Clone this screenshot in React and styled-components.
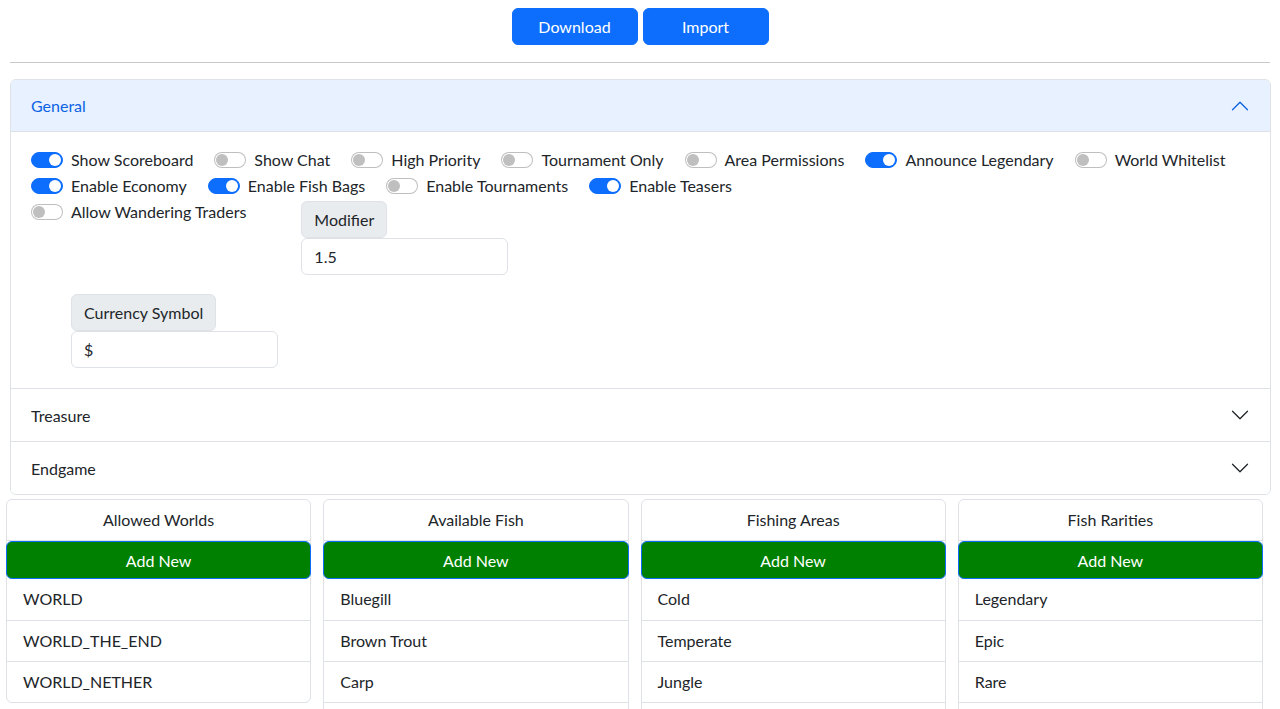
import React from "react"
import styled, { createGlobalStyle, css } from "styled-components"

const font = `"Lato", "Liberation Sans", sans-serif`
const blue = "#0d6efd"
const border = "#dee2e6"
const text = "#212529"

const GlobalStyle = createGlobalStyle`
  body {
    margin: 0;
    font-family: ${font};
    font-size: 16px;
    line-height: 1.5;
    color: ${text};
    background: #fff;
  }
  * {
    box-sizing: border-box;
  }
`

const Page = styled.div`
  padding-top: 8px;
`

const TopBar = styled.div`
  display: flex;
  justify-content: center;
  gap: 5px;
`

const PrimaryButton = styled.button`
  width: 126px;
  height: 37px;
  font-family: ${font};
  font-size: 16px;
  color: #fff;
  background-color: ${blue};
  border: 1px solid ${blue};
  border-radius: 6px;
  cursor: pointer;
`

const Rule = styled.hr`
  margin: 17px 10px 16px 10px;
  border: 0;
  border-top: 1px solid #c8c8c8;
`

const Accordion = styled.div`
  margin: 0 9px 0 10px;
  border: 1px solid ${border};
  border-radius: 6px;
  overflow: hidden;
`

const Item = styled.div`
  & + & {
    border-top: 1px solid ${border};
  }
`

const Header = styled.button`
  display: flex;
  align-items: center;
  justify-content: space-between;
  width: 100%;
  height: 52px;
  padding: 0 20px;
  font-family: ${font};
  font-size: 16px;
  text-align: left;
  border: 0;
  cursor: pointer;
  color: ${(p) => (p.$open ? "#0c63e4" : text)};
  background-color: ${(p) => (p.$open ? "#e7f1ff" : "#fff")};
  ${(p) =>
    p.$open &&
    css`
      border-bottom: 1px solid ${border};
    `}
  svg {
    width: 20px;
    height: 20px;
    transform: ${(p) => (p.$open ? "rotate(180deg)" : "none")};
  }
`

const Body = styled.div`
  padding: 16px 20px 20px 20px;
`

const Checks = styled.div`
  display: flex;
  flex-wrap: wrap;
  align-items: flex-start;
`

const Break = styled.div`
  flex-basis: 100%;
  height: 0;
`

const Check = styled.label`
  display: flex;
  align-items: center;
  height: 24px;
  margin: 0 21px 2px 0;
  white-space: nowrap;
`

const Switch = styled.span`
  position: relative;
  flex: none;
  width: 32px;
  height: 16px;
  margin-right: 8px;
  border-radius: 16px;
  border: 1px solid ${(p) => (p.$on ? blue : "rgba(0,0,0,0.25)")};
  background-color: ${(p) => (p.$on ? blue : "#fff")};
  &::after {
    content: "";
    position: absolute;
    top: 1px;
    left: ${(p) => (p.$on ? "17px" : "1px")};
    width: 12px;
    height: 12px;
    border-radius: 50%;
    background-color: ${(p) => (p.$on ? "#fff" : "#bfbfbf")};
  }
`

const Field = styled.div`
  display: flex;
  flex-direction: column;
  align-items: flex-start;
  margin: ${(p) => p.$margin || "0"};
`

const FieldLabel = styled.span`
  height: 37px;
  padding: 0 12px;
  line-height: 35px;
  background-color: #e9ecef;
  border: 1px solid ${border};
  border-radius: 6px;
  white-space: nowrap;
`

const FieldInput = styled.input`
  width: 207px;
  height: 37px;
  padding: 6px 12px;
  font-family: ${font};
  font-size: 16px;
  color: ${text};
  border: 1px solid ${border};
  border-radius: 6px;
  outline: none;
`

const Lists = styled.div`
  display: grid;
  grid-template-columns: repeat(4, 1fr);
  gap: 12px;
  margin: 4px 17px 0 6px;
`

const Card = styled.div`
  border: 1px solid ${border};
  border-radius: 6px;
  align-self: start;
`

const CardTitle = styled.div`
  height: 41px;
  line-height: 40px;
  text-align: center;
  border-bottom: 1px solid ${border};
`

const AddButton = styled.button`
  display: block;
  width: calc(100% + 2px);
  height: 38px;
  margin: 0 -1px;
  font-family: ${font};
  font-size: 16px;
  color: #fff;
  background-color: #008000;
  border: 1px solid ${blue};
  border-radius: 6px;
  cursor: pointer;
`

const Row = styled.div`
  height: 41px;
  line-height: 40px;
  padding: 0 16px;
  & + & {
    border-top: 1px solid ${border};
  }
`

const Chevron = () => (
  <svg viewBox="0 0 16 16" fill="currentColor">
    <path
      fillRule="evenodd"
      d="M1.646 4.646a.5.5 0 0 1 .708 0L8 10.293l5.646-5.647a.5.5 0 0 1 .708.708l-6 6a.5.5 0 0 1-.708 0l-6-6a.5.5 0 0 1 0-.708z"
    />
  </svg>
)

const toggles = [
  ["Show Scoreboard", true],
  ["Show Chat", false],
  ["High Priority", false],
  ["Tournament Only", false],
  ["Area Permissions", false],
  ["Announce Legendary", true],
  ["World Whitelist", false],
  ["Enable Economy", true],
  ["Enable Fish Bags", true],
  ["Enable Tournaments", false],
  ["Enable Teasers", true],
]

const lists = [
  ["Allowed Worlds", ["WORLD", "WORLD_THE_END", "WORLD_NETHER"]],
  ["Available Fish", ["Bluegill", "Brown Trout", "Carp", "Catfish"]],
  ["Fishing Areas", ["Cold", "Temperate", "Jungle", "Ocean"]],
  ["Fish Rarities", ["Legendary", "Epic", "Rare", "Common"]],
]

const Toggle = ({ label, on }) => (
  <Check>
    <Switch $on={on} />
    {label}
  </Check>
)

export default function App() {
  return (
    <Page>
      <GlobalStyle />
      <TopBar>
        <PrimaryButton>Download</PrimaryButton>
        <PrimaryButton>Import</PrimaryButton>
      </TopBar>
      <Rule />
      <Accordion>
        <Item>
          <Header $open>
            General
            <Chevron />
          </Header>
          <Body>
            <Checks>
              {toggles.map(([label, on]) => (
                <Toggle key={label} label={label} on={on} />
              ))}
              <Break />
              <Toggle label="Allow Wandering Traders" on={false} />
              <Field $margin="1px 0 0 34px">
                <FieldLabel>Modifier</FieldLabel>
                <FieldInput defaultValue="1.5" />
              </Field>
            </Checks>
            <Field $margin="19px 0 0 40px">
              <FieldLabel>Currency Symbol</FieldLabel>
              <FieldInput defaultValue="$" />
            </Field>
          </Body>
        </Item>
        <Item>
          <Header>
            Treasure
            <Chevron />
          </Header>
        </Item>
        <Item>
          <Header>
            Endgame
            <Chevron />
          </Header>
        </Item>
      </Accordion>
      <Lists>
        {lists.map(([title, rows]) => (
          <Card key={title}>
            <CardTitle>{title}</CardTitle>
            <AddButton>Add New</AddButton>
            {rows.map((r) => (
              <Row key={r}>{r}</Row>
            ))}
          </Card>
        ))}
      </Lists>
    </Page>
  )
}
